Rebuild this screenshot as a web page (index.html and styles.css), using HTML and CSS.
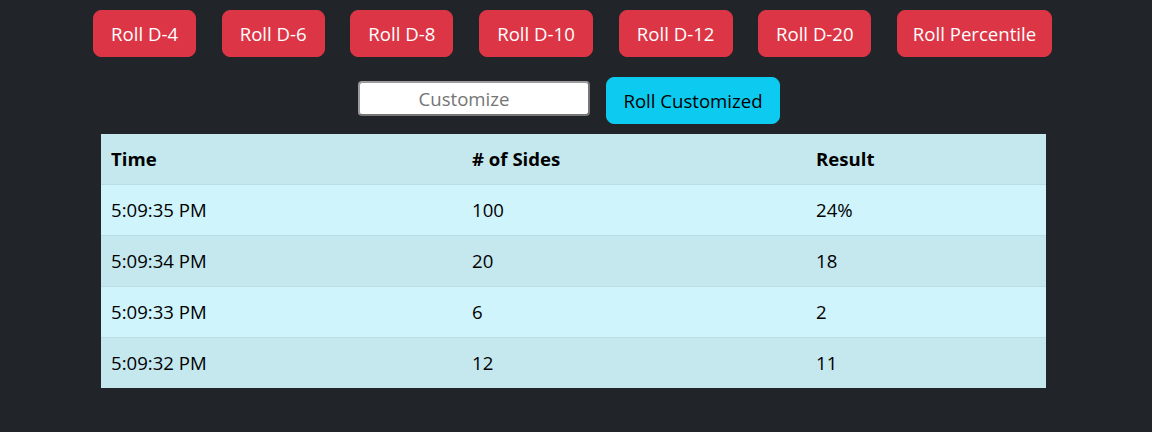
FILE: index.html
```html
<!DOCTYPE html>
<html>
<head>
<meta charset="utf-8">
<link rel="stylesheet" href="styles.css">
</head>
<body>
<div class="app">
  <div class="dice-row">
    <button class="btn btn-danger w-s">Roll D-4</button>
    <button class="btn btn-danger w-s">Roll D-6</button>
    <button class="btn btn-danger w-s">Roll D-8</button>
    <button class="btn btn-danger w-m">Roll D-10</button>
    <button class="btn btn-danger w-m">Roll D-12</button>
    <button class="btn btn-danger w-m2">Roll D-20</button>
    <button class="btn btn-danger w-l">Roll Percentile</button>
  </div>
  <div class="custom-row">
    <input class="custom-input" type="text" placeholder="Customize">
    <button class="btn btn-info w-c">Roll Customized</button>
  </div>
  <table class="results">
    <thead>
      <tr><th class="col-time">Time</th><th class="col-sides"># of Sides</th><th class="col-result">Result</th></tr>
    </thead>
    <tbody>
      <tr class="light"><td>5:09:35 PM</td><td>100</td><td>24%</td></tr>
      <tr class="dark"><td>5:09:34 PM</td><td>20</td><td>18</td></tr>
      <tr class="light"><td>5:09:33 PM</td><td>6</td><td>2</td></tr>
      <tr class="dark"><td>5:09:32 PM</td><td>12</td><td>11</td></tr>
    </tbody>
  </table>
</div>
</body>
</html>
```
FILE: styles.css
```css
html, body {
  margin: 0;
  padding: 0;
  background: #212529;
  height: 100%;
}
body {
  font-family: "Open Sans", "Noto Sans", sans-serif;
  color: #000;
}
.app {
  padding-top: 10px;
  display: flex;
  flex-direction: column;
  align-items: center;
}
.dice-row {
  display: flex;
  gap: 25.67px;
  justify-content: center;
  padding-right: 7px;
}
.btn {
  font-family: inherit;
  font-size: 18.6px;
  line-height: 29px;
  padding: 8px 0;
  border: 1px solid transparent;
  border-radius: 8px;
  cursor: pointer;
  text-align: center;
  white-space: nowrap;
}
.w-s { width: 103px; }
.w-m { width: 114px; }
.w-m2 { width: 113px; }
.w-l { width: 155px; }
.w-c { width: 174px; }
.btn-danger {
  background: #dc3545;
  border-color: #dc3545;
  color: #fff;
}
.btn-info {
  background: #0dcaf0;
  border-color: #0dcaf0;
  color: #000;
}
.custom-row {
  margin-top: 20px;
  display: flex;
  align-items: center;
  gap: 16px;
  padding-right: 14px;
}
.custom-input {
  width: 232px;
  height: 35px;
  box-sizing: border-box;
  font-family: inherit;
  font-size: 18.6px;
  text-align: center;
  border: 2px inset #767676;
  border-top-color: #f0f0f0;
  border-left-color: #f0f0f0;
  border-radius: 4px;
  background: #fff;
  padding: 0 24px 0 4px;
  margin-top: -4px;
}
.custom-input::placeholder {
  color: #757575;
}
.results {
  margin-top: 10px;
  width: 945px;
  border-collapse: collapse;
  font-size: 18.6px;
  line-height: 30px;
  margin-right: 5px;
}
.results th, .results td {
  text-align: left;
  padding: 10px 10px;
  border-bottom: 1px solid #badce3;
}
.results th {
  font-weight: bold;
  background: #c5e8ef;
}
.col-time { width: 341px; }
.col-sides { width: 324px; }
.col-result { width: 220px; }
.results tr.light td { background: #cff4fc; }
.results tr.dark td { background: #c5e8ef; }
.results tbody tr:last-child td { border-bottom: none; }
```
